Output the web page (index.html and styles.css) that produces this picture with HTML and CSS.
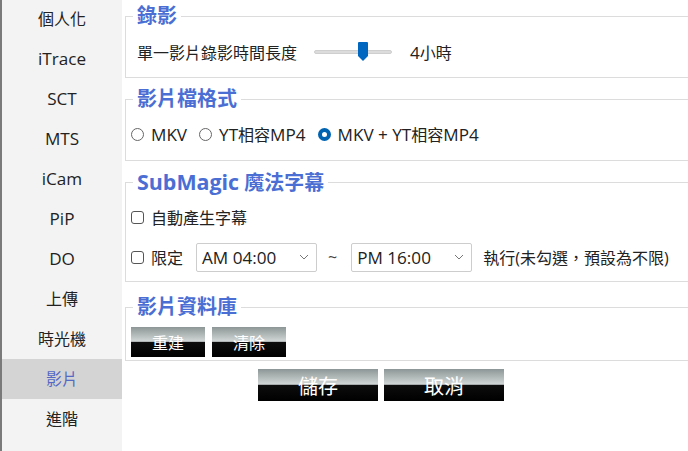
FILE: index.html
```html
<!DOCTYPE html>
<html lang="zh-Hant">
<head>
<meta charset="utf-8">
<title>影片設定</title>
<link rel="stylesheet" href="styles.css">
</head>
<body>
<div class="page">
  <nav class="sidebar">
    <div class="nav-item">個人化</div>
    <div class="nav-item"><span class="en">iTrace</span></div>
    <div class="nav-item"><span class="en">SCT</span></div>
    <div class="nav-item"><span class="en">MTS</span></div>
    <div class="nav-item"><span class="en">iCam</span></div>
    <div class="nav-item"><span class="en">PiP</span></div>
    <div class="nav-item"><span class="en">DO</span></div>
    <div class="nav-item">上傳</div>
    <div class="nav-item">時光機</div>
    <div class="nav-item active">影片</div>
    <div class="nav-item">進階</div>
  </nav>
  <main class="main">
    <fieldset class="group g1">
      <legend>錄影</legend>
      <div class="row">
        <span class="label">單一影片錄影時間長度</span>
        <div class="slider">
          <div class="track"></div>
          <svg class="thumb" width="10" height="19" viewBox="0 0 10 19"><path d="M0 1 Q0 0 1 0 H9 Q10 0 10 1 V14 L5 19 L0 14 Z" fill="#0067c0"/></svg>
        </div>
        <span class="value"><span class="en">4</span>小時</span>
      </div>
    </fieldset>

    <fieldset class="group g2">
      <legend>影片檔格式</legend>
      <div class="row">
        <label class="opt"><span class="radio"></span><span class="en">MKV</span></label>
        <label class="opt"><span class="radio"></span><span class="en">YT</span>相容<span class="en">MP4</span></label>
        <label class="opt"><span class="radio checked"></span><span class="en">MKV + YT</span>相容<span class="en">MP4</span></label>
      </div>
    </fieldset>

    <fieldset class="group g3">
      <legend><span class="en">SubMagic</span> 魔法字幕</legend>
      <div class="row">
        <label class="opt"><span class="check"></span>自動產生字幕</label>
      </div>
      <div class="row row2">
        <label class="opt"><span class="check"></span>限定</label>
        <div class="select"><span class="en">AM 04:00</span><svg width="10" height="6" viewBox="0 0 10 6"><path d="M1 1 L5 5 L9 1" fill="none" stroke="#777" stroke-width="1"/></svg></div>
        <span class="tilde">~</span>
        <div class="select"><span class="en">PM 16:00</span><svg width="10" height="6" viewBox="0 0 10 6"><path d="M1 1 L5 5 L9 1" fill="none" stroke="#777" stroke-width="1"/></svg></div>
        <span class="note">執行(未勾選，預設為不限)</span>
      </div>
    </fieldset>

    <fieldset class="group g4">
      <legend>影片資料庫</legend>
      <div class="btns">
        <button class="btn small">重建</button>
        <button class="btn small">清除</button>
      </div>
    </fieldset>

    <div class="actions">
      <button class="btn big">儲存</button>
      <button class="btn big">取消</button>
    </div>
  </main>
</div>
</body>
</html>
```

FILE: styles.css
```css
* { box-sizing: border-box; }
html, body { margin: 0; padding: 0; background: #fff; }
body {
  font-family: "Open Sans", "Noto Sans CJK TC", sans-serif;
  font-size: 16px;
  color: #222;
  overflow: hidden;
  width: 688px;
  height: 451px;
}
.en { font-size: 1.07em; }
.page { display: flex; height: 451px; }

.sidebar {
  width: 122px;
  flex: none;
  background: #f3f3f3;
  border-left: 2px solid #7a7a7a;
  margin-top: -1px;
}
.nav-item {
  height: 40px;
  display: flex;
  align-items: center;
  justify-content: center;
  font-size: 16px;
  line-height: 20px;
  color: #222;
}
.nav-item .en { line-height: 20px; }
.nav-item.active { background: #d4d4d4; color: #5468c4; }

.main {
  flex: 1;
  padding: 5px 0 0 3px;
  margin-right: -20px;
}

.group {
  margin: 0 0 10px 0;
  padding: 0 0 0 5px;
  border: 1px solid #dcdcdc;
  border-right: none;
  min-width: 0;
}
.group legend {
  font-size: 20px;
  font-weight: bold;
  color: #4a6ed3;
  line-height: 22px;
  padding: 0 4px;
  margin-left: 2px;
}

.row { display: flex; align-items: center; height: 30px; }
.g1 .row { margin: 10px 0 10px 6px; }
.g1 .label { margin-right: 17px; }
.slider { position: relative; width: 78px; height: 20px; margin-right: 18px; }
.track {
  position: absolute; left: 0; right: 0; top: 8px; height: 4px;
  background: #dcdcdc; border: 1px solid #cfcfcf; border-radius: 2px;
}
.thumb { position: absolute; left: 44px; top: 0; }

.g2 .row { margin: 9px 0 11px 0; }
.opt { display: flex; align-items: center; margin-right: 12px; }
.radio {
  width: 13px; height: 13px; border-radius: 50%;
  border: 1px solid #666; margin-right: 7px; background: #fff;
}
.radio.checked { border: 4px solid #0063b1; }
.check {
  width: 13px; height: 13px; border-radius: 3px;
  border: 1px solid #555; margin-right: 7px; background: #fff;
}

.g3 { margin-bottom: 14px; }
.g3 .row { margin-top: 8px; }
.g3 .row2 { margin-top: 10px; margin-bottom: 9px; }
.row2 .opt { margin-right: 13px; }
.select {
  width: 121px; height: 29px;
  border: 1px solid #cdcdcd; border-radius: 2px;
  display: flex; align-items: center; justify-content: space-between;
  padding: 0 7px 0 5px; font-size: 16px;
}
.tilde { margin: 0 14px 0 11px; color: #444; }
.note { margin-left: 11px; }

.btns { display: flex; gap: 7px; margin: 9px 0 3px 0; }
.btn {
  border: none;
  color: #fff;
  font-family: "Open Sans", "Noto Sans CJK TC", sans-serif;
  background: linear-gradient(to bottom, #8d9696 0%, #d2d7d7 48%, #0d0d0d 50%, #000 100%);
  padding: 0;
  display: flex; align-items: center; justify-content: center;
}
.btn.small { width: 74px; height: 30px; font-size: 16px; }
.btn.big { width: 120px; height: 32px; font-size: 20px; }
.actions { display: flex; gap: 6px; padding-left: 133px; margin-top: -2px; }
```
